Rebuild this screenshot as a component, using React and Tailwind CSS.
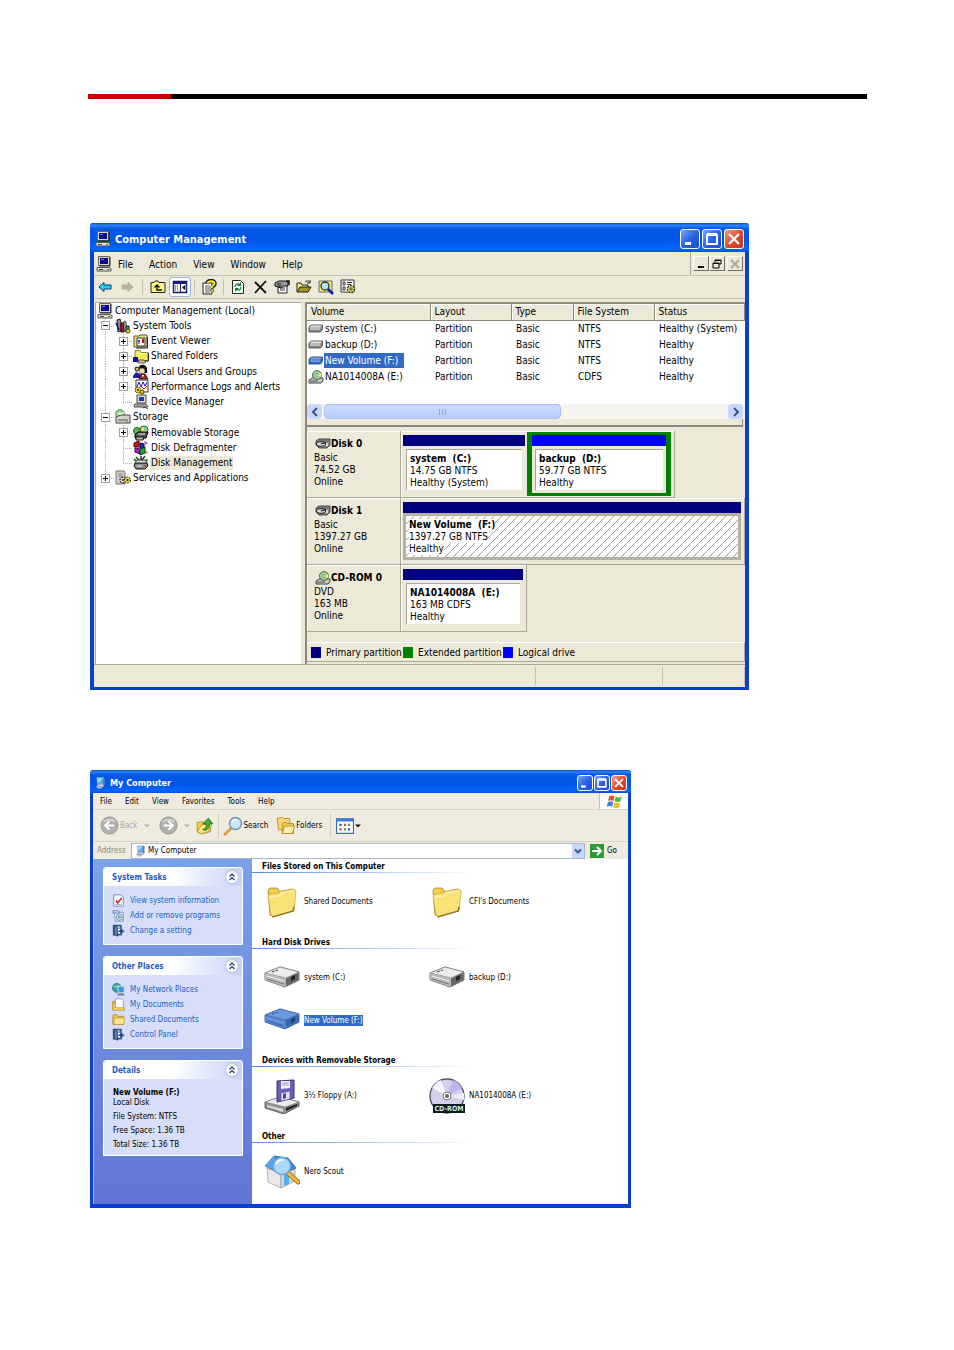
import React, { useState } from "react";

function Svg({ size = "h-4 w-4", box = "0 0 16 16", children }) {
  return (
    <svg className={`${size} shrink-0`} viewBox={box} aria-hidden="true">
      {children}
    </svg>
  );
}

/* ---------- 16px icons ---------- */

const ComputerIcon = ({ size }) => (
  <Svg size={size}>
    <path d="M2.500.500h11v9h-11z" fill="#d8d4c8" stroke="#66665f" />
    <path d="M4 2h8v6H4z" fill="#0a0a8c" />
    <path d="M5 3h3v1H5z" fill="#6a7cff" />
    <path d="M14 1v9H3" stroke="#222" fill="none" />
    <path d="M1 11.500h12l2 1v2.500H1z" fill="#e4e0d4" stroke="#55554f" />
    <path d="M3 13.500h4" stroke="#444" />
    <path d="M11 13.500h2" stroke="#18a018" />
  </Svg>
);

const ToolsIcon = () => (
  <Svg>
    <path d="M2 2l3-1 1 3v9l-3 1z" fill="#8c8c8c" stroke="#222" />
    <path d="M6 5h3v9H6z" fill="#b01818" stroke="#3c0000" />
    <path d="M9 3l2 1v9H9z" fill="#e8e8e8" stroke="#333" />
    <path d="M11 8h3v6h-3z" fill="#1e8c8c" stroke="#0a3232" />
    <circle cx="13" cy="13" r="2" fill="#f0d800" stroke="#5a5000" />
    <path d="M1 5l3 7" stroke="#13137d" strokeWidth="1.500" />
  </Svg>
);

const EventIcon = () => (
  <Svg>
    <path d="M1 3h5l1-1h7v12H1z" fill="#e8e078" stroke="#5c5830" />
    <path d="M4 5h8v8H4z" fill="#fff" stroke="#333" />
    <path d="M6 7v4M5 8h2" stroke="#0a0ac8" />
    <path d="M10 6v4" stroke="#d01010" strokeWidth="2" />
    <path d="M14.500 4v11H3" stroke="#222" fill="none" />
  </Svg>
);

const SharedFolderIcon = () => (
  <Svg>
    <path d="M2 2.500h5l1 2h7v8H2z" fill="#f4ec50" stroke="#8c8830" />
    <path d="M3 5.500h11" stroke="#fffbb8" />
    <path d="M15.500 5v8H6" stroke="#222" fill="none" />
    <path d="M0 9h5v5H0z" fill="#1010a0" />
    <path d="M5 12h6l2 2-1 1H5z" fill="#e0b888" stroke="#222" strokeWidth=".7" />
  </Svg>
);

const UsersIcon = () => (
  <Svg>
    <path d="M6 2c4-3 8 0 8 3v4H7z" fill="#111" />
    <circle cx="9" cy="7" r="3" fill="#f8d8b8" stroke="#222" strokeWidth=".5" />
    <circle cx="4" cy="5" r="2" fill="#e8b888" stroke="#111" />
    <path d="M0 12l3-4 4 2v4H0z" fill="#2020a0" />
    <path d="M6 15l2-5h4l3 5z" fill="#b01818" stroke="#222" />
    <path d="M9 11l2 0-1 3z" fill="#fff" />
  </Svg>
);

const PerfIcon = () => (
  <Svg>
    <path d="M3 1h12v12H3z" fill="#fff" stroke="#333" />
    <path d="M4 8l2-5 2 5 2-5 2 4 2-4" fill="none" stroke="#1818c0" />
    <path d="M5 10l3-3 3 3 3-3" fill="none" stroke="#d01818" />
    <circle cx="5" cy="11" r="3" fill="#f0d020" stroke="#443c00" strokeDasharray="2 1" />
    <circle cx="9" cy="13" r="2" fill="#f0d020" stroke="#443c00" />
    <circle cx="5" cy="11" r="1" fill="#332c00" />
  </Svg>
);

const DeviceIcon = () => (
  <Svg>
    <path d="M4 1h9v8H4z" fill="#e0dcd0" stroke="#444" />
    <path d="M6 3h5v4H6z" fill="#1838c8" />
    <path d="M2 10h11l2 3H1z" fill="#c8c4b8" stroke="#444" />
    <path d="M3 12h9" stroke="#777" />
    <path d="M10 14c3-2 4 2 5 0" stroke="#333" fill="none" />
  </Svg>
);

const StorageIcon = () => (
  <Svg>
    <circle cx="5" cy="5" r="4.500" fill="#8cd88c" stroke="#3c7840" strokeWidth=".7" />
    <path d="M5 5l4-2v4z" fill="#f0f080" />
    <circle cx="5" cy="5" r="1.500" fill="#fff" />
    <path d="M1 8l5-2h9v8H1z" fill="#d0d0cc" stroke="#444" />
    <path d="M3 11h10" stroke="#555" />
    <path d="M11 13h2" stroke="#18a018" />
  </Svg>
);

const RemovableIcon = () => (
  <Svg>
    <circle cx="4" cy="6" r="3.500" fill="#58b858" stroke="#225c22" />
    <circle cx="11" cy="5" r="4" fill="#e0e058" stroke="#225c22" />
    <path d="M11 1v4l4 1z" fill="#50c0c0" />
    <path d="M2 10l3-3h10l-2 6H2z" fill="#555" stroke="#000" />
    <path d="M5 9h7" stroke="#e8e8e8" />
    <path d="M3 12h8l-1 3H3z" fill="#bbb" stroke="#111" />
  </Svg>
);

const DefragIcon = () => (
  <Svg>
    <path d="M1 3l5-2v6H1z" fill="#d81818" stroke="#500" />
    <path d="M7 3l4 1v5l-4-1z" fill="#1838d8" stroke="#004" />
    <path d="M2 8l5 1v5l-5-2z" fill="#b818b8" stroke="#404" />
    <path d="M7 9l5-2v6l-5 2z" fill="#18a838" stroke="#032" />
    <path d="M11 1l4 2-3 2z" fill="#a050e0" />
    <path d="M13 10l2 3-3 1z" fill="#e87818" />
  </Svg>
);

const DiskMgmtIcon = () => (
  <Svg>
    <path d="M2 8h12l1 3-3 3H3l-2-3z" fill="#888" stroke="#111" />
    <path d="M2 8l2-3h8l2 3z" fill="#ddd" stroke="#333" />
    <path d="M3 2l3 3M12 1l-3 4M8 1v4" stroke="#333" strokeWidth="1.500" />
    <path d="M4 11h5" stroke="#eee" />
    <path d="M11 11h2" stroke="#e01818" />
    <path d="M1 4l2 2M14 4l-1 2" stroke="#1a8c1a" strokeWidth="2" />
  </Svg>
);

const ServicesIcon = () => (
  <Svg>
    <path d="M1 1h8l1 1v12H1z" fill="#d0ccc0" stroke="#777" />
    <path d="M3 4h4M3 6h4" stroke="#888" />
    <circle cx="8" cy="10" r="3" fill="#ece9d8" stroke="#222" strokeWidth="1.300" strokeDasharray="2 1" />
    <circle cx="12.500" cy="10" r="3" fill="#f0d820" stroke="#222" strokeDasharray="2 1" />
    <circle cx="8" cy="10" r="1" fill="#111" />
    <circle cx="12.500" cy="10" r="1" fill="#111" />
  </Svg>
);

const DriveIcon = ({ blue }) => (
  <Svg>
    <path
      d="M3 4h11.500v4.500l-2 2.500H1V6z"
      fill={blue ? "#3c6cc0" : "#8c8c8c"}
      stroke={blue ? "#274b8c" : "#4c4c4c"}
      strokeWidth=".9"
    />
    <path d="M3 4.500h11l-2 2H1.500z" fill={blue ? "#7aa0e0" : "#e4e4e4"} />
    <path d="M2 8h10" stroke={blue ? "#9cbcf0" : "#e8e8e8"} />
  </Svg>
);

const CdDriveIcon = () => (
  <Svg>
    <path d="M1 11l3-2h11v3l-2 2H1z" fill="#c8c8c4" stroke="#333" strokeWidth=".9" />
    <circle cx="9" cy="6" r="4.500" fill="#98d098" stroke="#305c30" strokeWidth=".8" />
    <path d="M9 6l4-2a4 4 0 0 1 0 4z" fill="#e8f070" />
    <circle cx="9" cy="6" r="1.300" fill="#fff" stroke="#555" strokeWidth=".5" />
    <path d="M2 12h8" stroke="#555" />
  </Svg>
);

const DiskIcon = () => (
  <Svg>
    <path d="M1 5l3-2h11v6l-3 3H4L1 9z" fill="#8c8c8c" stroke="#333" strokeWidth=".9" />
    <path d="M3 4h11v2H2z" fill="#777" />
    <ellipse cx="6" cy="8" rx="4.500" ry="2.300" fill="#d8d8d8" stroke="#222" />
    <path d="M6 8l5-1.500" stroke="#111" strokeWidth="1.300" />
    <path d="M12 7v3" stroke="#eee" strokeWidth="1.500" />
  </Svg>
);

const GreenUpFolder = () => (
  <Svg size="h-[18px] w-[18px]">
    <path d="M1 5l5-1 1 1 6-1v9l-8 2-4-2z" fill="#f4cc50" stroke="#b08820" strokeWidth=".7" />
    <path d="M1 13l4-6 9-1-3 7-6 2z" fill="#fce488" stroke="#b08820" strokeWidth=".7" />
    <path d="M8 12c3-1 4-3 4-6h3l-4-5-5 5h3c0 3 0 4-3 5z" fill="#3cb03c" stroke="#1a701a" strokeWidth=".7" />
  </Svg>
);

const FolderIcon = ({ size }) => (
  <Svg size={size}>
    <path d="M1 3l1-1h4l1 2h7v10H1z" fill="#f0c848" stroke="#a88020" strokeWidth=".9" />
    <path d="M3 6h12v8H2z" fill="#fce890" stroke="#b89030" strokeWidth=".9" />
  </Svg>
);

const FoldersIcon = () => (
  <Svg size="h-5 w-5">
    <path d="M1 2l4-1 1 1h5v9H2z" fill="#f8d870" stroke="#b08820" strokeWidth=".7" />
    <path d="M5 6l3-1 1 1h5v8H5z" fill="#f4cc50" stroke="#b08820" strokeWidth=".7" />
    <path d="M5 14l2-6h8l-2 6z" fill="#fdf0a8" stroke="#b08820" strokeWidth=".7" />
  </Svg>
);

const MyComputerIcon = ({ size }) => (
  <Svg size={size}>
    <path d="M4 1h9v9H5z" fill="#58a8f0" stroke="#b8c8e0" />
    <path d="M5 2h6L6 8z" fill="#b0dcff" />
    <path d="M12 1l2 1v9l-2 1z" fill="#6878a0" />
    <path d="M3 12l4-2h5l1 2-4 3H5z" fill="#d0d4e0" stroke="#8890a8" strokeWidth=".6" />
    <path d="M5 12l5 1" stroke="#6070a0" />
  </Svg>
);

const SearchIcon = () => (
  <Svg size="h-5 w-5" box="0 0 20 20">
    <path d="M2 18l6-6" stroke="#d89030" strokeWidth="3" strokeLinecap="round" />
    <path d="M2 17l5-5" stroke="#f4c880" strokeWidth="1" />
    <circle cx="12.500" cy="7.500" r="6" fill="#c8e8fc" stroke="#7090b0" strokeWidth="1.300" />
    <path d="M9 6a4 4 0 0 1 5-2" stroke="#fff" strokeWidth="1.500" fill="none" />
  </Svg>
);

const InfoIcon = () => (
  <Svg size="h-[13px] w-[13px]">
    <path d="M2 1h9l3 3v11H2z" fill="#f4f6ff" stroke="#6880b8" />
    <path d="M5 8l2 3 5-6" stroke="#d02818" strokeWidth="2" fill="none" />
    <path d="M4 13h8" stroke="#88a0d0" />
  </Svg>
);

const ProgramsIcon = () => (
  <Svg size="h-[13px] w-[13px]">
    <path d="M3 4h11v11H4z" fill="#f0f4ff" stroke="#7088b8" />
    <circle cx="9" cy="10" r="4" fill="#c8e0f0" stroke="#6888a8" />
    <path d="M9 10l3-3a4 4 0 0 1 1 4z" fill="#a8e088" />
    <circle cx="9" cy="10" r="1.200" fill="#fff" stroke="#567" />
    <path d="M1 2h7l2 3H1z" fill="#c0d0f0" stroke="#6080b8" />
  </Svg>
);

const SettingIcon = () => (
  <Svg size="h-[13px] w-[13px]">
    <path d="M2 2h9v11H2z" fill="#fff" stroke="#31548c" strokeWidth="2" />
    <path d="M3 2l4 2v11l-4-2z" fill="#5880bc" stroke="#23406c" />
    <path d="M8 9h7M12 6v6" stroke="#24447c" strokeWidth="1.800" />
    <path d="M8 5h2" stroke="#58a058" strokeWidth="2" />
  </Svg>
);

const NetworkIcon = () => (
  <Svg size="h-[13px] w-[13px]">
    <circle cx="6" cy="6" r="5.500" fill="#38a0a8" stroke="#2870a0" />
    <path d="M2 5c3-3 4 2 7-2" stroke="#90e060" strokeWidth="2" fill="none" />
    <path d="M7 4h8v8H8z" fill="#3c90ec" stroke="#e4ecf8" />
    <path d="M8 13h6l1 2H7z" fill="#8c98ac" stroke="#50607c" strokeWidth=".6" />
  </Svg>
);

const DocsIcon = () => (
  <Svg size="h-[13px] w-[13px]">
    <path d="M1 4h4v10H1z" fill="#f0c848" stroke="#a88020" />
    <path d="M4 1h8l2 2v10H4z" fill="#fff" stroke="#8090b0" />
    <path d="M1 6l3 1v5h11v3H1z" fill="#fcd870" stroke="#b89030" />
  </Svg>
);

/* ---------- large icons ---------- */

const BigFolder = () => (
  <Svg size="h-9 w-9" box="0 0 36 36">
    <path d="M4 6l2-2 7 0 2 2v2l13-3 2 2v18L9 32l-3-1z" fill="#f4cc50" stroke="#a48430" strokeWidth=".8" />
    <path d="M4 12l2-2 8-1 3-2 13-2 2 2-2 20-20 6-3-2z" fill="#fbe277" stroke="#c8a038" strokeWidth=".7" />
    <path d="M5 13l10-1 3-3 12-2" stroke="#fff7c4" fill="none" />
    <path d="M8 33l21-6 1-4" stroke="#806418" strokeWidth="1.200" fill="none" />
  </Svg>
);

const BigDrive = ({ blue }) => (
  <Svg size="h-9 w-9" box="0 0 36 36">
    <path d="M1 13l15-6 19 5v8l-14 7L1 20z" fill={blue ? "#4a78c4" : "#8a8a8a"} stroke={blue ? "#2c5090" : "#555"} strokeWidth=".8" />
    <path d="M1 13l15-6 19 5-13 6z" fill={blue ? "#6c98dc" : "#ececec"} stroke={blue ? "#3a62a8" : "#777"} strokeWidth=".6" />
    <path d="M1 13l21 5v9L1 20z" fill={blue ? "#5484d0" : "#b8b8b8"} />
    <path d="M22 19l12-6v7l-12 6z" fill={blue ? "#3868b0" : "#666"} />
    <path d="M27 17l4-2v4l-4 2z" fill={blue ? "#1c4080" : "#222"} />
    <path d="M8 12l6-2" stroke={blue ? "#2c5498" : "#444"} strokeDasharray="3 1" />
    <path d="M3 16l17 5" stroke={blue ? "#88ace8" : "#f4f4f4"} />
    <path d="M3 19l17 5" stroke={blue ? "#3c68b0" : "#777"} />
  </Svg>
);

const FloppyDrive = () => (
  <Svg size="h-9 w-9" box="0 0 36 36">
    <path d="M1 24l15-5 19 5v4l-15 8L1 30z" fill="#909090" stroke="#444" strokeWidth=".8" />
    <path d="M1 24l15-5 19 5-14 5z" fill="#ececec" stroke="#777" strokeWidth=".6" />
    <path d="M3 27l16 4v3L3 29z" fill="#d8d8d8" />
    <path d="M22 30l11-4v2l-11 5z" fill="#222" />
    <path d="M13 3l17-1v18l-17 4z" fill="#6a60b8" stroke="#38307c" />
    <path d="M17 3h9v7l-9 1z" fill="#f4f4ff" />
    <path d="M18 5h7M18 7h7" stroke="#9898b8" />
    <path d="M17 15l9-2v8l-9 2z" fill="#e0e0f0" stroke="#403888" strokeWidth=".5" />
    <path d="M19 16l3-1v5l-3 1z" fill="#4c4494" />
  </Svg>
);

const CdRom = () => (
  <Svg size="h-9 w-9" box="0 0 36 36">
    <circle cx="18" cy="18" r="17" fill="#d4d0ec" stroke="#505064" strokeWidth="1.300" />
    <path d="M18 18L3 10A17 17 0 0 1 12 2z" fill="#f4f4fc" />
    <path d="M18 18l6-16a17 17 0 0 1 9 8z" fill="#beb4ee" />
    <path d="M18 18l17-3v7z" fill="#f0ecff" />
    <circle cx="18" cy="18" r="4" fill="#fff" stroke="#777" />
    <circle cx="18" cy="18" r="2" fill="#666" />
    <path d="M4 26h32v9H4z" fill="#0c1c20" />
    <text x="20" y="33" fontSize="7" fontWeight="bold" textAnchor="middle" fill="#d0f0f0" fontFamily="DejaVu Sans Condensed, sans-serif">
      CD-ROM
    </text>
  </Svg>
);

const NeroIcon = () => (
  <Svg size="h-9 w-9" box="0 0 36 36">
    <path d="M3 14l14 6v14L4 28z" fill="#e8e8ec" stroke="#999" strokeWidth=".7" />
    <path d="M17 20l14-6v13l-14 7z" fill="#d4d8e0" stroke="#999" strokeWidth=".7" />
    <path d="M20 20l5-2v12l-5 2z" fill="#50b0f0" />
    <path d="M1 12L10 2l14 2 8 10-14 6z" fill="#3c88d8" stroke="#2060a8" strokeWidth=".8" />
    <path d="M1 12L10 2l7 17z" fill="#5ca4e8" />
    <path d="M24 19l10 9" stroke="#b07818" strokeWidth="5" strokeLinecap="round" />
    <path d="M24 19l10 9" stroke="#f4b840" strokeWidth="3" strokeLinecap="round" />
    <circle cx="18" cy="12" r="8.500" fill="#b8e0fa" fillOpacity=".9" stroke="#6ca8dc" strokeWidth="1.300" />
    <path d="M12 10a7 7 0 0 1 7-4" stroke="#fff" strokeWidth="2" fill="none" />
  </Svg>
);

/* ---------- mmc toolbar icons ---------- */

const ArrowIcon = ({ flip, gray }) => (
  <Svg>
    <path
      d={flip ? "M14 8L9 3.500V6H3v4h6v2.500z" : "M2 8l5-4.500V6h7v4H7v2.500z"}
      fill={gray ? "#b4b1a3" : "#18d8e8"}
      stroke={gray ? "#b4b1a3" : "#0a3c78"}
    />
  </Svg>
);

const UpIcon = () => (
  <Svg>
    <path d="M1 3.500h3l1-1.500h3l1 1.500h6v10H1z" fill="#fcf480" stroke="#222" />
    <path d="M7 6v5h5M4.500 8.500L7 6l2.500 2.500" stroke="#111" strokeWidth="1.300" fill="none" />
  </Svg>
);

const PaneIcon = () => (
  <Svg>
    <path d="M1.500 2.500h13v11h-13z" fill="#fff" stroke="#1a1a6c" strokeWidth="1.500" />
    <path d="M2 3h12v2H2z" fill="#1a1a8c" />
    <path d="M8.500 4v9" stroke="#1a1a6c" />
    <path d="M3 7h4M3 9h4M3 11h4" stroke="#1a1a6c" strokeDasharray="1 1" />
    <path d="M13 6v5l-3-2.500z" fill="#111" />
  </Svg>
);

const HelpIcon = () => (
  <Svg>
    <path d="M2 4h9v11H2z" fill="#fff" stroke="#222" />
    <path d="M4 7h5M4 9h5M4 11h5M4 13h5" stroke="#555" />
    <path d="M6 4.500c0-4 8-4 8 0 0 3-3 2-3 5M11 10.500v2" stroke="#222" strokeWidth="3.500" fill="none" />
    <path d="M6.500 4.500c0-3 7-3 7 0 0 2-3 2-3 4.500M11 10.500v2" stroke="#f8ec30" strokeWidth="1.800" fill="none" />
  </Svg>
);

const RefreshIcon = () => (
  <Svg>
    <path d="M2.500 1.500h8l3 3v10h-11z" fill="#fff" stroke="#222" />
    <path d="M5 8c0-3 3-4 4-2M11 8c0 3-3 4-4 2" stroke="#128028" strokeWidth="1.300" fill="none" />
    <path d="M7 7h4V3zM9 9H5v4z" fill="#128028" />
  </Svg>
);

const DeleteIcon = () => (
  <Svg>
    <path d="M3 3l11 11M14 2L3 14" stroke="#111" strokeWidth="1.800" fill="none" />
  </Svg>
);

const PropsIcon = () => (
  <Svg>
    <path d="M4 5h9v9H4z" fill="#fff" stroke="#222" />
    <path d="M6 9h5M6 11h5" stroke="#333" />
    <path d="M1 4l4-2h6l3 1v4H9L7 9 4 8 1 7z" fill="#999" stroke="#111" />
    <path d="M3 5h4M4 7h3" stroke="#111" />
    <path d="M12 2h3v4" stroke="#111" strokeWidth="1.500" fill="none" />
  </Svg>
);

const OpenIcon = () => (
  <Svg>
    <path d="M1 13V4h4l1 2h6v2" fill="#fcf480" stroke="#222" />
    <path d="M1 13l3-5h11l-3 5z" fill="#a09820" stroke="#222" />
    <path d="M9 3c2-2 4-1 5 1M14 1v3h-3" stroke="#222" fill="none" />
  </Svg>
);

const FindIcon = () => (
  <Svg>
    <path d="M1 2h13v11H1z" fill="#f4ec70" stroke="#666" />
    <circle cx="7" cy="7" r="4" fill="#a8e8f0" stroke="#333" strokeWidth="1.300" />
    <path d="M10 10l5 5" stroke="#1818a0" strokeWidth="2.500" />
  </Svg>
);

const GearIcon = () => (
  <Svg>
    <path d="M1 1h13v12H1z" fill="#fff" stroke="#333" />
    <path d="M3 3h2v3H3zM3 8h2v3H3z" fill="none" stroke="#333" />
    <path d="M7 3.500h5M7 5.500h4M7 8.500h2" stroke="#333" />
    <circle cx="11" cy="10" r="3.500" fill="#f4e040" stroke="#333" strokeWidth="1.500" strokeDasharray="2 1" />
    <circle cx="11" cy="10" r="1.200" fill="#fff" stroke="#333" />
  </Svg>
);

/* ---------- window frame ---------- */

function CaptionButton({ kind, small }) {
  const tone =
    kind === "Close"
      ? "bg-linear-to-br from-[#f0a088] via-[#e04c28] to-[#c03818]"
      : "bg-linear-to-br from-[#7aa4f8] via-[#2c62e4] to-[#1c4cd0]";
  return (
    <button
      aria-label={kind}
      className={`${tone} ${small ? "h-4 w-4" : "h-5 w-5"} flex items-center justify-center rounded-[3px] border border-white`}
    >
      <Svg size={small ? "h-3.5 w-3.5" : "h-[18px] w-[18px]"} box="0 0 18 18">
        {kind === "Minimize" && <path d="M4 12h6v3H4z" fill="#fff" />}
        {kind === "Maximize" && (
          <path d="M4 5h10v9H4zM4 4h10" fill="none" stroke="#fff" strokeWidth="2" />
        )}
        {kind === "Close" && (
          <path d="M4 4l10 10M14 4L4 14" stroke="#fff" strokeWidth="2.400" />
        )}
      </Svg>
    </button>
  );
}

function TitleBar({ icon, title, small }) {
  return (
    <header
      className={`${small ? "h-[23px] px-1 text-[8px]" : "h-[29px] pr-[5px] pl-1 text-[11px]"} flex items-center rounded-t-[3px] bg-[linear-gradient(#0a48c8_0%,#2b84f8_8%,#0458e4_20%,#0055e6_60%,#0466ff_90%,#0450d8_100%)] pt-[3px] font-bold text-white`}
    >
      {icon}
      <h2 className={`${small ? "text-[9px]" : ""} ml-1 flex-1 pt-0.5`}>{title}</h2>
      <div className={`${small ? "gap-px" : "gap-0.5"} flex`}>
        <CaptionButton kind="Minimize" small={small} />
        <CaptionButton kind="Maximize" small={small} />
        <CaptionButton kind="Close" small={small} />
      </div>
    </header>
  );
}

/* ---------- Computer Management ---------- */

const tree = [
  { level: 0, text: "Computer Management (Local)", icon: <ComputerIcon /> },
  { level: 1, text: "System Tools", icon: <ToolsIcon />, box: "-" },
  { level: 2, text: "Event Viewer", icon: <EventIcon />, box: "+" },
  { level: 2, text: "Shared Folders", icon: <SharedFolderIcon />, box: "+" },
  { level: 2, text: "Local Users and Groups", icon: <UsersIcon />, box: "+" },
  { level: 2, text: "Performance Logs and Alerts", icon: <PerfIcon />, box: "+" },
  { level: 2, text: "Device Manager", icon: <DeviceIcon />, last: true },
  { level: 1, text: "Storage", icon: <StorageIcon />, box: "-" },
  { level: 2, text: "Removable Storage", icon: <RemovableIcon />, box: "+" },
  { level: 2, text: "Disk Defragmenter", icon: <DefragIcon /> },
  { level: 2, text: "Disk Management", icon: <DiskMgmtIcon />, last: true, active: true },
  { level: 1, text: "Services and Applications", icon: <ServicesIcon />, box: "+", last: true },
];

function TreeCell({ node }) {
  return (
    <span className="relative flex w-[18px] shrink-0 items-center justify-center self-stretch">
      <span
        className={`${node.last ? "h-1/2" : "h-full"} absolute top-0 left-[9px] border-l border-dotted border-[#b5b2a4]`}
      />
      <span className="absolute top-1/2 left-[9px] w-[9px] border-t border-dotted border-[#b5b2a4]" />
      {node.box && (
        <button
          aria-label={node.box === "+" ? "Expand" : "Collapse"}
          className="relative ml-px h-[9px] w-[9px] border border-[#a5a294] bg-white"
        >
          <svg viewBox="0 0 7 7" className="block h-[7px] w-[7px]">
            <path d={node.box === "+" ? "M1 3.500h5M3.500 1v5" : "M1 3.500h5"} stroke="#000" />
          </svg>
        </button>
      )}
    </span>
  );
}

function Tree() {
  return (
    <nav className="w-[206px] shrink-0 border-t border-l border-[#aca899] bg-white">
      <ul className="flex h-[183px] flex-col">
        {tree.map((node) => (
          <li key={node.text} className="flex min-h-0 flex-1 items-center">
            {node.level === 2 && (
              <span className="flex w-[18px] shrink-0 justify-center self-stretch">
                <span className="ml-px border-l border-dotted border-[#b5b2a4]" />
              </span>
            )}
            {node.level > 0 && <TreeCell node={node} />}
            <span className="flex w-[18px] shrink-0 justify-center">{node.icon}</span>
            <a
              href="#"
              className={`${node.active ? "bg-[#ece9d8]" : ""} px-px leading-[14px] whitespace-nowrap`}
            >
              {node.text}
            </a>
          </li>
        ))}
      </ul>
    </nav>
  );
}

const volumes = [
  { name: "system (C:)", fs: "NTFS", status: "Healthy (System)" },
  { name: "backup (D:)", fs: "NTFS", status: "Healthy" },
  { name: "New Volume (F:)", fs: "NTFS", status: "Healthy", active: true },
  { name: "NA1014008A (E:)", fs: "CDFS", status: "Healthy", cd: true },
];

function VolumeTable() {
  return (
    <div className="h-[100px] bg-white">
      <table className="w-full table-fixed border-collapse text-left">
        <colgroup>
          <col className="w-[123px]" />
          <col className="w-[81px]" />
          <col className="w-[62px]" />
          <col className="w-[81px]" />
          <col />
        </colgroup>
        <thead>
          <tr className="h-4 bg-[#ece9d8]">
            {["Volume", "Layout", "Type", "File System", "Status"].map((head) => (
              <th
                key={head}
                className="border-r border-b border-[#8c897a] py-0 pl-1 leading-[15px] font-normal whitespace-nowrap shadow-[inset_1px_1px_0_#fff]"
              >
                {head}
              </th>
            ))}
          </tr>
        </thead>
        <tbody>
          {volumes.map((vol) => (
            <tr key={vol.name} className="h-4">
              <td className="p-0 whitespace-nowrap">
                <div className="flex h-4 items-center pl-px">
                  {vol.cd ? <CdDriveIcon /> : <DriveIcon blue={vol.active} />}
                  <span className={`${vol.active ? "bg-[#316ac5] pr-1.5 text-white" : ""} pl-px leading-[15px]`}>
                    {vol.name}
                  </span>
                </div>
              </td>
              <td className="py-0 pl-[5px] leading-4">Partition</td>
              <td className="py-0 pl-[5px] leading-4">Basic</td>
              <td className="py-0 pl-[5px] leading-4">{vol.fs}</td>
              <td className="py-0 pl-[5px] leading-4 whitespace-nowrap">{vol.status}</td>
            </tr>
          ))}
        </tbody>
      </table>
    </div>
  );
}

function ScrollBar() {
  return (
    <div className="flex h-[15px] bg-[#f6f5f0]">
      <button aria-label="Scroll left" className="flex w-[15px] items-center justify-center rounded-sm bg-[#c6d6fc]">
        <Svg size="h-2.5 w-2.5" box="0 0 10 10">
          <path d="M7 1L3 5l4 4" stroke="#3c5488" strokeWidth="2" fill="none" />
        </Svg>
      </button>
      <div className="ml-0.5 flex w-[237px] items-center justify-center gap-0.5 rounded-sm border border-[#a8bff5] bg-linear-to-b from-[#cddcff] to-[#b8ccfb]">
        <span className="h-1.5 w-px bg-[#8ca8e8]" />
        <span className="h-1.5 w-px bg-[#8ca8e8]" />
        <span className="h-1.5 w-px bg-[#8ca8e8]" />
      </div>
      <button aria-label="Scroll right" className="mr-0.5 ml-auto flex w-[15px] items-center justify-center rounded-sm bg-[#c6d6fc]">
        <Svg size="h-2.5 w-2.5" box="0 0 10 10">
          <path d="M3 1l4 4-4 4" stroke="#3c5488" strokeWidth="2" fill="none" />
        </Svg>
      </button>
    </div>
  );
}

function Partition({ name, size, status, color = "bg-[#000080]", hatched }) {
  const line = hatched ? "w-fit bg-white" : "";
  return (
    <div className="flex flex-1 flex-col">
      <div className={`${color} h-[11px]`} />
      <div
        className={`${hatched ? "border-[#b5b2a2] bg-[linear-gradient(135deg,#fff_46%,#a0a09c_46%,#a0a09c_54%,#fff_54%)] bg-size-[8px_8px]" : "border-[#ece9d8] bg-white"} flex-1 border-3`}
      >
        <div
          className={`${hatched ? "" : "border-t border-l border-[#aca899]"} h-full pt-[3px] pl-[3px] leading-3 whitespace-nowrap`}
        >
          <p className={`${line} font-bold`}>{name}</p>
          <p className={line}>{size}</p>
          <p className={line}>{status}</p>
        </div>
      </div>
    </div>
  );
}

function DiskRow({ icon, name, lines, width, children }) {
  return (
    <div className="flex h-[67px]">
      <div className="w-[94px] shrink-0 border-r border-b border-[#aca899] pt-[5px] pl-[7px] leading-3 shadow-[inset_1px_1px_0_#fff]">
        <h3 className="flex h-4 items-center font-bold">
          <span className="ml-px">{icon}</span>
          {name}
        </h3>
        {lines.map((line) => (
          <p key={line}>{line}</p>
        ))}
      </div>
      <div className={`${width} flex border-r border-b border-[#aca899] py-1 pr-[3px] pl-0.5 shadow-[inset_1px_1px_0_#fff]`}>
        {children}
      </div>
    </div>
  );
}

function DiskGraph() {
  return (
    <div className="flex flex-1 flex-col bg-[#ece9d8] pt-1">
      <DiskRow icon={<DiskIcon />} name="Disk 0" lines={["Basic", "74.52 GB", "Online"]} width="w-[274px]">
        <Partition name={"system\u00a0 (C:)"} size="14.75 GB NTFS" status="Healthy (System)" />
        <div className="-my-[3px] ml-0.5 flex w-36 border-x-5 border-y-3 border-[#008000]">
          <Partition name={"backup\u00a0 (D:)"} size="59.77 GB NTFS" status="Healthy" color="bg-[#0000ff]" />
        </div>
      </DiskRow>
      <DiskRow icon={<DiskIcon />} name="Disk 1" lines={["Basic", "1397.27 GB", "Online"]} width="flex-1">
        <Partition name={"New Volume\u00a0 (F:)"} size="1397.27 GB NTFS" status="Healthy" hatched />
      </DiskRow>
      <DiskRow icon={<CdDriveIcon />} name="CD-ROM 0" lines={["DVD", "163 MB", "Online"]} width="w-[126px]">
        <Partition name={"NA1014008A\u00a0 (E:)"} size="163 MB CDFS" status="Healthy" />
      </DiskRow>
      <div className="mt-auto mb-0.5 flex h-5 items-center border-t border-r border-b border-t-white border-r-[#aca899] border-b-[#aca899] pl-1">
        <span className="h-[11px] w-2.5 bg-[#000080]" />
        <span className="ml-[5px] w-[77px] whitespace-nowrap">Primary partition</span>
        <span className="h-[11px] w-2.5 bg-[#008000]" />
        <span className="ml-[5px] w-[85px] whitespace-nowrap">Extended partition</span>
        <span className="h-[11px] w-2.5 bg-[#0000ff]" />
        <span className="ml-[5px] whitespace-nowrap">Logical drive</span>
      </div>
    </div>
  );
}

const Sep = ({ gap = "mx-1" }) => <span className={`${gap} h-4 w-px bg-[#c5c2b2]`} />;

function ToolButton({ label, pressed, children }) {
  return (
    <button
      aria-label={label}
      className={`${pressed ? "rounded-[3px] border border-[#98b5e2] bg-white" : ""} flex h-5 w-[22px] items-center justify-center`}
    >
      {children}
    </button>
  );
}

const mdi =
  "flex h-[15px] w-4 items-center justify-center border border-white border-r-[#716f64] border-b-[#716f64] bg-[#ece9d8]";

function ManagementWindow() {
  return (
    <section className="w-full max-w-[659px] rounded-t-[4px] bg-[#0a3fd0] text-[10px] text-black">
      <TitleBar icon={<span className="ml-px"><ComputerIcon /></span>} title="Computer Management" />
      <div className="mx-1 flex flex-col bg-[#ece9d8]">
        <div className="flex h-6 items-center border-b border-[#c5c2b2] pl-0.5">
          <ComputerIcon />
          <div className="ml-1.5 flex gap-4 pt-px">
            {["File", "Action", "View", "Window", "Help"].map((item) => (
              <button key={item}>{item}</button>
            ))}
          </div>
          <div className="ml-auto flex h-full items-center border-l border-[#aca899] pr-0.5 pl-0.5">
            <button aria-label="Minimize child" className={mdi}>
              <Svg size="h-2.5 w-2.5" box="0 0 10 10"><path d="M2 7h6v2H2z" /></Svg>
            </button>
            <button aria-label="Restore child" className={mdi}>
              <Svg size="h-2.5 w-2.5" box="0 0 10 10">
                <path d="M3 3V1h6v4H7M3 1.500h6M1 4h6v5H1zM1 4.500h6" fill="none" stroke="#000" />
              </Svg>
            </button>
            <button aria-label="Close child" className={`${mdi} ml-0.5`}>
              <Svg size="h-2.5 w-2.5" box="0 0 10 10"><path d="M1 1l8 8M9 1L1 9" stroke="#aca899" strokeWidth="2" /></Svg>
            </button>
          </div>
        </div>

        <div className="flex h-[23px] items-center border-b border-[#c5c2b2]">
          <ToolButton label="Back"><ArrowIcon /></ToolButton>
          <ToolButton label="Forward"><ArrowIcon flip gray /></ToolButton>
          <Sep />
          <ToolButton label="Up"><UpIcon /></ToolButton>
          <ToolButton label="Show tree" pressed><PaneIcon /></ToolButton>
          <Sep gap="mx-[3px]" />
          <ToolButton label="Help"><HelpIcon /></ToolButton>
          <Sep gap="mx-[3px]" />
          <ToolButton label="Refresh"><RefreshIcon /></ToolButton>
          <ToolButton label="Delete"><DeleteIcon /></ToolButton>
          <ToolButton label="Properties"><PropsIcon /></ToolButton>
          <ToolButton label="Open"><OpenIcon /></ToolButton>
          <ToolButton label="Find"><FindIcon /></ToolButton>
          <ToolButton label="Settings"><GearIcon /></ToolButton>
        </div>

        <div className="flex pt-[3px] pl-px">
          <Tree />
          <div className="ml-1 flex min-w-0 flex-1 flex-col border-t-2 border-l-2 border-[#8c897a]">
            <VolumeTable />
            <ScrollBar />
            <div className="mr-0.5 h-2 border-r border-b-2 border-[#8c897a] bg-[#ece9d8]" />
            <div className="flex h-[237px] flex-col">
              <DiskGraph />
            </div>
          </div>
        </div>

        <div className="flex h-[23px] border-t border-[#aca899]">
          <span className="my-0.5 flex-1 border-r border-[#c5c2b2]" />
          <span className="my-0.5 w-[127px] border-r border-[#c5c2b2]" />
          <span className="my-0.5 w-[82px] border-r border-[#c5c2b2]" />
        </div>
      </div>
      <div className="h-[3px]" />
    </section>
  );
}

/* ---------- My Computer ---------- */

function Caret({ gray }) {
  return (
    <Svg size="h-1.5 w-1.5" box="0 0 6 6">
      <path d="M0 1.500h6l-3 3z" fill={gray ? "#b4b1a3" : "#111"} />
    </Svg>
  );
}

function RoundArrow({ flip }) {
  return (
    <Svg size="h-[19px] w-[19px]" box="0 0 20 20">
      <circle cx="10" cy="10" r="9" fill="#b0b0ac" stroke="#94948e" />
      <path d="M4 6a8 6 0 0 1 12 0" stroke="#d4d4d0" strokeWidth="2" fill="none" />
      <path
        d={flip ? "M5 10h9M10 5.500l4.500 4.500-4.500 4.500" : "M15 10H6M10 5.500L5.500 10l4.500 4.500"}
        stroke="#fff"
        strokeWidth="2.200"
        fill="none"
      />
    </Svg>
  );
}

function SideGroup({ title, children }) {
  return (
    <section className="rounded-t-[3px] border border-white bg-[#d6dff7]">
      <h3 className="flex h-[18px] items-center rounded-t-[3px] bg-linear-to-r from-white via-white to-[#c6d3f7] pl-2 font-bold text-[#215dc6]">
        <span className="flex-1 pt-0.5">{title}</span>
        <button aria-label={`Collapse ${title}`} className="mr-1 h-3 w-3 rounded-full bg-white shadow-[0_0_1px_1px_#b4c0e4]">
          <Svg size="h-3 w-3" box="0 0 12 12">
            <path d="M3.500 5.500L6 3l2.500 2.500M3.500 9L6 6.500 8.500 9" stroke="#222c6c" strokeWidth="1.200" fill="none" />
          </Svg>
        </button>
      </h3>
      {children}
    </section>
  );
}

function SideLinks({ items }) {
  return (
    <ul className="pt-[7px] pb-1.5 pl-2">
      {items.map(([text, icon]) => (
        <li key={text}>
          <a href="#" className="flex h-[15px] items-center gap-[5px] whitespace-nowrap text-[#215dc6]">
            {icon}
            {text}
          </a>
        </li>
      ))}
    </ul>
  );
}

const groups = [
  {
    title: "Files Stored on This Computer",
    items: [["Shared Documents", <BigFolder />], ["CFI's Documents", <BigFolder />]],
  },
  {
    title: "Hard Disk Drives",
    items: [["system (C:)", <BigDrive />], ["backup (D:)", <BigDrive />], ["New Volume (F:)", <BigDrive blue />]],
  },
  {
    title: "Devices with Removable Storage",
    items: [["3½ Floppy (A:)", <FloppyDrive />], ["NA1014008A (E:)", <CdRom />]],
  },
  { title: "Other", items: [["Nero Scout", <NeroIcon />]] },
];

function FileGroup({ title, items }) {
  return (
    <section>
      <h3 className="h-[13px] pl-2.5 leading-[15px] font-bold">{title}</h3>
      <div className="h-px w-[224px] bg-linear-to-r from-[#5a8ce0] to-white" />
      <ul className="grid grid-cols-[165px_165px] pt-2 pb-3 pl-3">
        {items.map(([text, icon]) => (
          <li key={text} className="flex h-[42px] items-center gap-1">
            {icon}
            <span className={text.startsWith("New") ? "bg-[#316ac5] leading-[11px] text-white" : ""}>{text}</span>
          </li>
        ))}
      </ul>
    </section>
  );
}

function MyComputerWindow() {
  const [address, setAddress] = useState("My Computer");

  return (
    <section className="w-full max-w-[541px] rounded-t-[4px] bg-[#0a3fd0] text-[8px] text-black">
      <TitleBar small icon={<MyComputerIcon size="h-3 w-3" />} title="My Computer" />
      <div className="mx-[3px] bg-[#efecdf]">
        <div className="flex h-[17px] items-center border-b border-[#d8d5c6] pl-[7px]">
          <div className="flex gap-[13px] pt-0.5">
            {["File", "Edit", "View", "Favorites", "Tools", "Help"].map((item) => (
              <button key={item}>{item}</button>
            ))}
          </div>
          <span className="ml-auto flex h-full w-[29px] items-center justify-center border-l border-[#c5c2b2] bg-white">
            <Svg size="h-[17px] w-[17px]">
              <path d="M3 3c2-1 3-1 5 0L7 7.500c-2-1-3-1-5 0z" fill="#e8582c" />
              <path d="M9 3.500c2 1 4 1 6 0L13.500 8c-2 1-4 1-5.500 0z" fill="#68b838" />
              <path d="M1.800 8.500c2-1 3-1 5 0l-1 4.500c-2-1-3-1-5 0z" fill="#3c80e0" />
              <path d="M7.800 9c2 1 4 1 5.500 0l-1 4.500c-2 1-4 1-5.500 0z" fill="#f4b820" />
            </Svg>
          </span>
        </div>

        <div className="flex h-8 items-center border-b border-[#d8d5c6] pl-[7px]">
          <button className="flex items-center gap-px text-[#aca899]"><RoundArrow />Back</button>
          <span className="mr-[9px] ml-[7px]"><Caret gray /></span>
          <button aria-label="Forward"><RoundArrow flip /></button>
          <span className="mx-1.5"><Caret gray /></span>
          <button aria-label="Up"><GreenUpFolder /></button>
          <span className="mx-1 h-6 w-px bg-[#d0cdbd]" />
          <button className="flex items-center"><SearchIcon />Search</button>
          <button className="ml-2 flex items-center"><FoldersIcon />Folders</button>
          <span className="mr-[5px] ml-2 h-6 w-px bg-[#d0cdbd]" />
          <button aria-label="Views" className="flex items-center gap-px">
            <Svg size="h-[18px] w-[18px]">
              <path d="M.5 1.500h15v13H.5z" fill="#fff" stroke="#3c6cc0" />
              <path d="M.5 1.500h15V4H.5z" fill="#3c78d8" />
              <path d="M3 6h2v2H3zM10.500 10h2v2h-2z" fill="#3858b0" />
              <path d="M7 6h2v2H7zM3 10h2v2H3z" fill="#c85838" />
              <path d="M10.500 6h2v2h-2zM7 10h2v2H7z" fill="#58983c" />
            </Svg>
            <Caret />
          </button>
        </div>

        <div className="flex h-[17px] items-center pl-1">
          <label htmlFor="address" className="w-[34px] text-[#8c897a]">Address</label>
          <div className="flex h-4 flex-1 items-center border border-[#a8b8c8] bg-white pl-0.5">
            <MyComputerIcon size="h-3 w-3" />
            <input
              id="address"
              value={address}
              onChange={(e) => setAddress(e.target.value)}
              className="ml-0.5 min-w-0 flex-1 bg-transparent outline-none"
            />
            <button aria-label="Open address list" className="flex h-3.5 w-3 items-center justify-center bg-[#c6d6fc]">
              <Svg size="h-2 w-2" box="0 0 8 8">
                <path d="M1 2.500l3 3 3-3" stroke="#3c5488" strokeWidth="2" fill="none" />
              </Svg>
            </button>
          </div>
          <button className="flex w-[43px] items-center gap-[3px] pl-[5px]">
            <Svg size="h-3.5 w-3.5" box="0 0 14 14">
              <path d="M0 0h14v14H0z" fill="#2c9c38" />
              <path d="M2 7h8M7 3l4 4-4 4" stroke="#fff" strokeWidth="2" fill="none" />
            </Svg>
            Go
          </button>
        </div>

        <div className="flex">
          <aside className="flex w-[159px] shrink-0 flex-col gap-[11px] border-l border-[#a8b8e8] bg-linear-to-b from-[#7ba2e7] to-[#6375d6] px-[9px] pt-2">
            <SideGroup title="System Tasks">
              <SideLinks
                items={[
                  ["View system information", <InfoIcon />],
                  ["Add or remove programs", <ProgramsIcon />],
                  ["Change a setting", <SettingIcon />],
                ]}
              />
            </SideGroup>
            <SideGroup title="Other Places">
              <SideLinks
                items={[
                  ["My Network Places", <NetworkIcon />],
                  ["My Documents", <DocsIcon />],
                  ["Shared Documents", <FolderIcon size="h-[13px] w-[13px]" />],
                  ["Control Panel", <SettingIcon />],
                ]}
              />
            </SideGroup>
            <SideGroup title="Details">
              <div className="pt-[9px] pb-[5px] pl-[9px]">
                <p className="leading-[10px] font-bold">New Volume (F:)</p>
                <p className="leading-[10px]">Local Disk</p>
                <p className="mt-1 leading-[10px]">File System: NTFS</p>
                <p className="mt-1 leading-[10px]">Free Space: 1.36 TB</p>
                <p className="mt-1 leading-[10px]">Total Size: 1.36 TB</p>
              </div>
            </SideGroup>
          </aside>
          <div className="h-[345px] flex-1 bg-white">
            {groups.map((group) => (
              <FileGroup key={group.title} {...group} />
            ))}
          </div>
        </div>
      </div>
      <div className="h-1" />
    </section>
  );
}

function App() {
  return (
    <main className="min-h-screen bg-white pt-[94px] pr-[87px] pb-[142px] pl-[88px] font-['DejaVu_Sans_Condensed','DejaVu_Sans',sans-serif]">
      <div className="flex h-[5px] bg-black">
        <span className="w-[83px] bg-[#cc0000]" />
      </div>
      <div className="flex flex-col gap-20 pt-[124px] pl-0.5">
        <ManagementWindow />
        <MyComputerWindow />
      </div>
    </main>
  );
}

export default App;
